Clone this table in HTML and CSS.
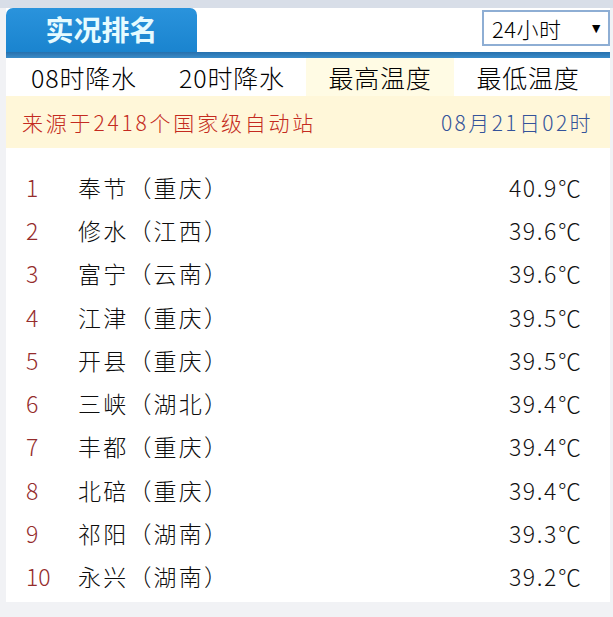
FILE: index.html
```html
<!DOCTYPE html>
<html lang="zh-CN">
<head>
<meta charset="utf-8">
<title>实况排名</title>
<link rel="stylesheet" href="styles.css">
</head>
<body>
<div class="page">
  <div class="widget">
    <div class="header">
      <div class="title-tab">实况排名</div>
      <div class="period-select"><span class="period-text">24小时</span><span class="period-arrow">▼</span></div>
    </div>
    <div class="header-bar"></div>
    <div class="tabs">
      <div class="tab">08时降水</div>
      <div class="tab">20时降水</div>
      <div class="tab active">最高温度</div>
      <div class="tab">最低温度</div>
    </div>
    <div class="info">
      <span class="source">来源于2418个国家级自动站</span>
      <span class="time">08月21日02时</span>
    </div>
    <ol class="rank-list">
      <li class="row"><span class="num">1</span><span class="name">奉节（重庆）</span><span class="temp">40.9℃</span></li>
      <li class="row"><span class="num">2</span><span class="name">修水（江西）</span><span class="temp">39.6℃</span></li>
      <li class="row"><span class="num">3</span><span class="name">富宁（云南）</span><span class="temp">39.6℃</span></li>
      <li class="row"><span class="num">4</span><span class="name">江津（重庆）</span><span class="temp">39.5℃</span></li>
      <li class="row"><span class="num">5</span><span class="name">开县（重庆）</span><span class="temp">39.5℃</span></li>
      <li class="row"><span class="num">6</span><span class="name">三峡（湖北）</span><span class="temp">39.4℃</span></li>
      <li class="row"><span class="num">7</span><span class="name">丰都（重庆）</span><span class="temp">39.4℃</span></li>
      <li class="row"><span class="num">8</span><span class="name">北碚（重庆）</span><span class="temp">39.4℃</span></li>
      <li class="row"><span class="num">9</span><span class="name">祁阳（湖南）</span><span class="temp">39.3℃</span></li>
      <li class="row"><span class="num">10</span><span class="name">永兴（湖南）</span><span class="temp">39.2℃</span></li>
    </ol>
  </div>
</div>
</body>
</html>
```
FILE: styles.css
```css
* { box-sizing: border-box; }
html, body { margin: 0; padding: 0; }
body {
  background: #f1f2f5;
  font-family: "Noto Sans CJK SC", "Liberation Sans", sans-serif;
  font-weight: 300;
  color: #111;
}
.page {
  width: 613px;
  height: 617px;
  border-top: 8px solid #d8dee8;
  padding: 0 3px 0 6px;
  background: #f1f2f5;
}
.widget {
  background: #ffffff;
  height: 594px;
}
.header {
  display: flex;
  justify-content: space-between;
  align-items: flex-start;
  height: 44px;
}
.title-tab {
  width: 191px;
  height: 44px;
  background: linear-gradient(#2a93dc, #1a84cf);
  border-radius: 7px 7px 0 0;
  color: #e6fbff;
  font-weight: 700;
  font-size: 28px;
  line-height: 42px;
  text-align: center;
}
.period-select {
  margin-top: 2px;
  width: 128px;
  height: 36px;
  border: 2px solid #8eaed4;
  display: flex;
  align-items: center;
  justify-content: space-between;
  padding: 0 5px 0 8px;
  background: #fff;
}
.period-text {
  font-size: 22px;
  color: #000;
  letter-spacing: 0.5px;
}
.period-arrow {
  font-size: 14px;
  color: #000;
  font-family: "DejaVu Sans", sans-serif;
}
.header-bar {
  height: 6px;
  background: linear-gradient(#2670ad, #3a8cc9);
}
.tabs {
  display: grid;
  grid-template-columns: repeat(4, 148px);
  padding-left: 4px;
  height: 38px;
}
.tab {
  font-size: 25px;
  letter-spacing: 0.8px;
  line-height: 38px;
  text-align: center;
  color: #000;
}
.tab.active {
  background: #fffbe4;
}
.info {
  height: 52px;
  background: #fff7d9;
  display: flex;
  justify-content: space-between;
  align-items: center;
  padding: 0 17px 0 16px;
  font-size: 21px;
  letter-spacing: 2.8px;
}
.source { color: #c42a20; }
.time { color: #34539a; letter-spacing: 2.4px; }
.rank-list {
  list-style: none;
  margin: 0;
  padding: 17px 29px 0 16px;
}
.row {
  display: flex;
  align-items: center;
  height: 43.3px;
  font-size: 23px;
}
.num {
  width: 56px;
  color: #952c2c;
  padding-left: 4px;
}
.name {
  flex: 1;
  color: #0d0d0d;
  letter-spacing: 2.2px;
}
.temp {
  color: #111;
  letter-spacing: 1.6px;
  margin-right: -1.6px;
}
```
